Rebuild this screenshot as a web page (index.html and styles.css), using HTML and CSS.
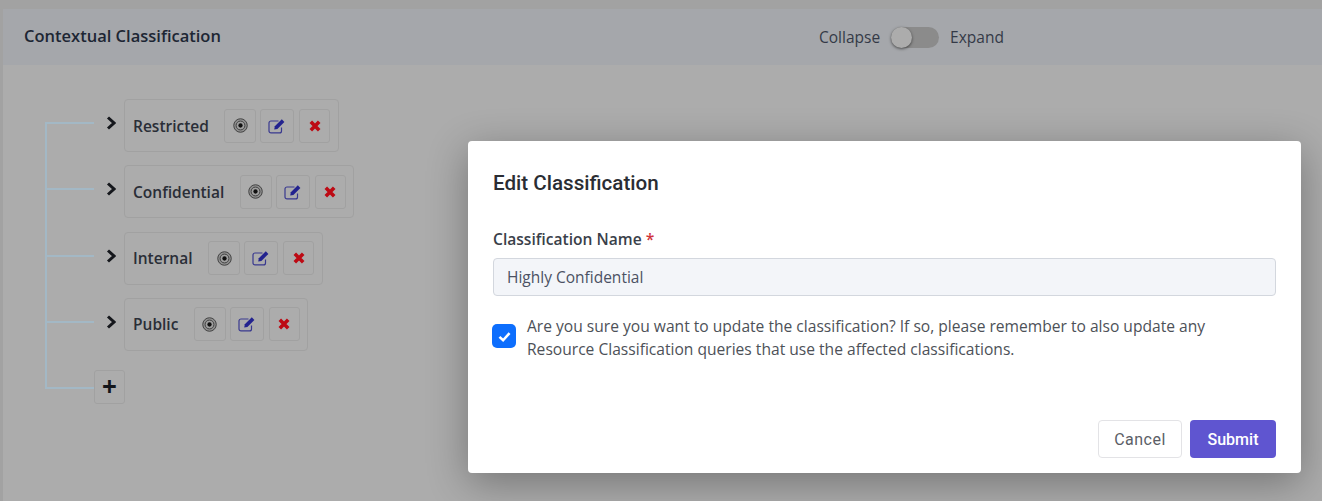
FILE: index.html
```html
<!DOCTYPE html>
<html lang="en">
<head>
<meta charset="utf-8">
<title>Contextual Classification</title>
<link rel="stylesheet" href="styles.css">
</head>
<body>
<svg class="defs" width="0" height="0" aria-hidden="true">
  <symbol id="i-target" viewBox="0 0 16 16">
    <circle cx="8" cy="8" r="7.2" fill="#8f8f8f" stroke="#3d3d3d" stroke-width="1"/>
    <circle cx="8" cy="8" r="4.700" fill="#a0a0a0" stroke="#3d3d3d" stroke-width="1"/>
    <circle cx="8" cy="8" r="2.300" fill="#111"/>
  </symbol>
  <symbol id="i-edit" viewBox="0 0 18 16">
    <path d="M13.500 9.500v3.400a2 2 0 0 1-2 2H3a2 2 0 0 1-2-2V5a2 2 0 0 1 2-2h7.500" fill="none" stroke="#39398f" stroke-width="1.200"/>
    <path d="M6.800 8.300 13.800 1.300l2.600 2.600-7 7-3.200.6z" fill="#23238f"/>
  </symbol>
  <symbol id="i-x" viewBox="0 0 12 12">
    <path d="M1.800 1.800 10.200 10.200M10.200 1.800 1.800 10.200" fill="none" stroke="#bd0a14" stroke-width="3.600"/>
  </symbol>
  <symbol id="i-chev" viewBox="0 0 10 14">
    <path d="M2 1.500 8 7 2 12.500" fill="none" stroke="#15171c" stroke-width="3"/>
  </symbol>
</svg>

<main class="card">
  <header class="card-head">
    <h1 class="card-title">Contextual Classification</h1>
    <div class="switch-group">
      <span>Collapse</span>
      <span class="switch"><span class="knob"></span></span>
      <span>Expand</span>
    </div>
  </header>

  <ul class="tree">
    <li class="row">
      <span class="conn"></span>
      <button class="toggle" type="button" aria-label="Expand"><svg class="chev"><use href="#i-chev"/></svg></button>
      <div class="node">
        <span class="node-name">Restricted</span>
        <button class="act act-a" type="button"><svg class="ic-target"><use href="#i-target"/></svg></button>
        <button class="act act-b" type="button"><svg class="ic-edit"><use href="#i-edit"/></svg></button>
        <button class="act act-c" type="button"><svg class="ic-x"><use href="#i-x"/></svg></button>
      </div>
    </li>
    <li class="row">
      <span class="conn"></span>
      <button class="toggle" type="button" aria-label="Expand"><svg class="chev"><use href="#i-chev"/></svg></button>
      <div class="node">
        <span class="node-name">Confidential</span>
        <button class="act act-a" type="button"><svg class="ic-target"><use href="#i-target"/></svg></button>
        <button class="act act-b" type="button"><svg class="ic-edit"><use href="#i-edit"/></svg></button>
        <button class="act act-c" type="button"><svg class="ic-x"><use href="#i-x"/></svg></button>
      </div>
    </li>
    <li class="row">
      <span class="conn"></span>
      <button class="toggle" type="button" aria-label="Expand"><svg class="chev"><use href="#i-chev"/></svg></button>
      <div class="node">
        <span class="node-name">Internal</span>
        <button class="act act-a" type="button"><svg class="ic-target"><use href="#i-target"/></svg></button>
        <button class="act act-b" type="button"><svg class="ic-edit"><use href="#i-edit"/></svg></button>
        <button class="act act-c" type="button"><svg class="ic-x"><use href="#i-x"/></svg></button>
      </div>
    </li>
    <li class="row">
      <span class="conn"></span>
      <button class="toggle" type="button" aria-label="Expand"><svg class="chev"><use href="#i-chev"/></svg></button>
      <div class="node">
        <span class="node-name">Public</span>
        <button class="act act-a" type="button"><svg class="ic-target"><use href="#i-target"/></svg></button>
        <button class="act act-b" type="button"><svg class="ic-edit"><use href="#i-edit"/></svg></button>
        <button class="act act-c" type="button"><svg class="ic-x"><use href="#i-x"/></svg></button>
      </div>
    </li>
    <li class="row row-add">
      <span class="conn"></span>
      <button class="add" type="button" aria-label="Add">+</button>
    </li>
  </ul>
</main>

<section class="modal" role="dialog" aria-labelledby="modal-title">
  <h2 class="modal-title" id="modal-title">Edit Classification</h2>
  <label class="field-label" for="name">Classification Name <span class="req">*</span></label>
  <input class="field-input" id="name" type="text" value="Highly Confidential">
  <div class="confirm">
    <span class="check">
      <svg viewBox="0 0 14 14" width="15" height="15"><path d="M2.300 7.300 5.700 10.500 11.700 3.800" fill="none" stroke="#fff" stroke-width="2.400"/></svg>
    </span>
    <p class="confirm-text">Are you sure you want to update the classification? If so, please remember to also update any<br>Resource Classification queries that use the affected classifications.</p>
  </div>
  <div class="modal-foot">
    <button class="btn btn-cancel" type="button">Cancel</button>
    <button class="btn btn-submit" type="button">Submit</button>
  </div>
</section>
</body>
</html>
```
FILE: styles.css
```css
* { box-sizing: border-box; }
html, body { margin: 0; height: 100%; }
body {
  position: relative;
  height: 501px;
  overflow: hidden;
  padding: 9px 0 0 3px;
  background: #a2a2a2;
  font-family: "Open Sans", "Noto Sans", sans-serif;
}
.defs { position: absolute; }

.card { height: 492px; background: #acacac; }
.card-head {
  display: flex;
  align-items: center;
  height: 56px;
  padding-left: 21px;
  background: #a5a7ab;
}
.card-title {
  margin: 0 0 3px;
  width: 795px;
  font-size: 16.500px;
  font-weight: 600;
  color: #1d2634;
}
.switch-group {
  display: flex;
  align-items: center;
  font-size: 15.500px;
  color: #343a47;
}
.switch {
  position: relative;
  display: block;
  width: 48px;
  height: 21px;
  margin: 0 11px;
  border-radius: 11px;
  background: #8b8b8b;
}
.knob {
  position: absolute;
  left: 0;
  top: 0;
  width: 21px;
  height: 21px;
  border-radius: 50%;
  background: #acacac;
  box-shadow: 0 1px 3px rgba(0, 0, 0, .55);
}

.tree {
  display: flex;
  flex-direction: column;
  list-style: none;
  width: 400px;
  height: 267px;
  margin: 57px 0 0 42px;
  padding: 0;
  border-left: 2px solid #a3b8c5;
}
.row {
  flex: none;
  display: flex;
  align-items: flex-start;
  height: 53px;
  margin-bottom: 13.330px;
}
.row:first-child { margin-top: -23px; }
.row-add { margin-top: 6px; }
.conn {
  flex: none;
  width: 47px;
  height: 2px;
  margin-top: 23px;
  background: #a3b8c5;
}
.row-add .conn { margin-top: 17px; }
.toggle {
  flex: none;
  display: flex;
  justify-content: center;
  width: 30px;
  height: 30px;
  margin-top: 17px;
  padding: 0 0 0 3px;
  border: 0;
  background: none;
}
.chev { width: 10px; height: 14px; }
.node {
  display: flex;
  align-items: center;
  height: 53px;
  padding: 0 7.500px 0 8px;
  border: 1px solid #a1a1a1;
  border-radius: 4px;
}
.node-name {
  margin-right: 15.500px;
  font-size: 15.500px;
  font-weight: 600;
  color: #2a2e37;
}
.act {
  display: flex;
  align-items: center;
  justify-content: center;
  height: 34px;
  margin-right: 4px;
  padding: 0;
  border: 1px solid #a1a1a1;
  border-radius: 3px;
  background: none;
}
.act-a { width: 32px; }
.act-b { width: 34px; margin-right: 5px; }
.act-c { width: 31px; margin-right: 0; }
.ic-target { width: 15px; height: 15px; }
.ic-edit { width: 18px; height: 16px; }
.ic-x { width: 12px; height: 12px; }
.add {
  flex: none;
  display: block;
  width: 31px;
  height: 34px;
  padding: 0 0 2px;
  border: 1px solid #a1a1a1;
  border-radius: 3px;
  background: none;
  font: 700 26px/1 "Open Sans", sans-serif;
  color: #14161b;
}

.modal {
  position: absolute;
  left: 468px;
  top: 141px;
  width: 833px;
  height: 332px;
  padding: 30px 25px 0;
  background: #fff;
  border-radius: 4px;
  box-shadow: 0 10px 40px rgba(0, 0, 0, .32);
}
.modal-title {
  margin: 0 0 34px;
  font: 500 20.600px/24px Roboto, sans-serif;
  color: #2a2d33;
}
.field-label {
  display: block;
  margin-bottom: 9px;
  font-size: 15.600px;
  line-height: 20px;
  font-weight: 600;
  color: #3a3f4a;
}
.req { color: #d0343c; }
.field-input {
  display: block;
  width: 100%;
  height: 38px;
  padding: 0 13px;
  border: 1px solid #d3d7de;
  border-radius: 4px;
  background: #f3f5f9;
  font: 400 15.500px "Open Sans", sans-serif;
  color: #4b5163;
}
.confirm {
  display: flex;
  align-items: flex-start;
  margin-top: 17px;
}
.check {
  flex: none;
  display: flex;
  align-items: center;
  justify-content: center;
  width: 24px;
  height: 24px;
  margin: 11px 11px 0 -1px;
  border-radius: 5px;
  background: #0d6efd;
}
.confirm-text {
  margin: 1.500px 0 0;
  font-size: 15.600px;
  line-height: 23px;
  color: #4d5158;
}
.modal-foot {
  display: flex;
  justify-content: flex-end;
  margin-top: 59.500px;
}
.btn {
  height: 38px;
  border-radius: 4px;
  font: 500 16px Roboto, sans-serif;
}
.btn-cancel {
  width: 84px;
  margin-right: 8px;
  border: 1px solid #e3e3e6;
  background: #fff;
  font-weight: 400;
  letter-spacing: .5px;
  color: #5b5e66;
}
.btn-submit {
  width: 86px;
  border: 0;
  background: #5f55d0;
  color: #fff;
}
```
